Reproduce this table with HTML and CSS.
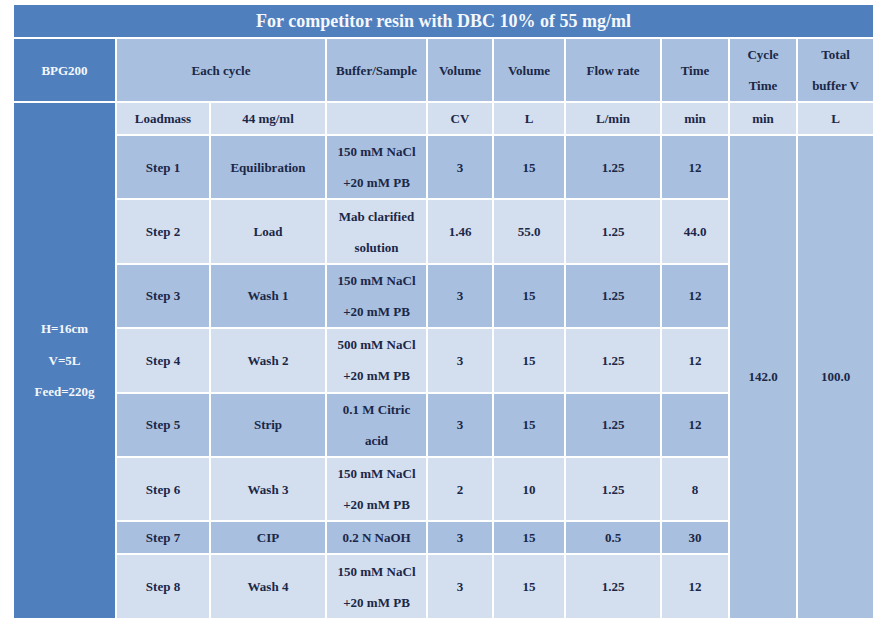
FILE: index.html
```html
<!DOCTYPE html>
<html>
<head>
<meta charset="utf-8">
<link rel="stylesheet" href="styles.css">
</head>
<body>
<table class="resin">
  <colgroup>
    <col class="c1"><col class="c2"><col class="c3"><col class="c4"><col class="c5">
    <col class="c6"><col class="c7"><col class="c8"><col class="c9"><col class="c10">
  </colgroup>
  <tr class="r-title"><td class="title" colspan="10">For competitor resin with DBC 10% of 55 mg/ml</td></tr>
  <tr class="r-head">
    <td class="dark">BPG200</td>
    <td class="mid" colspan="2">Each cycle</td>
    <td class="mid">Buffer/Sample</td>
    <td class="mid">Volume</td>
    <td class="mid">Volume</td>
    <td class="mid">Flow rate</td>
    <td class="mid">Time</td>
    <td class="mid">Cycle<br>Time</td>
    <td class="mid">Total<br>buffer V</td>
  </tr>
  <tr class="r-unit">
    <td class="dark info" rowspan="9">H=16cm<br>V=5L<br>Feed=220g</td>
    <td class="light">Loadmass</td>
    <td class="light">44 mg/ml</td>
    <td class="light"></td>
    <td class="light">CV</td>
    <td class="light">L</td>
    <td class="light">L/min</td>
    <td class="light">min</td>
    <td class="light">min</td>
    <td class="light">L</td>
  </tr>
  <tr class="r-step mid-row">
    <td>Step 1</td><td>Equilibration</td><td>150 mM NaCl<br>+20 mM PB</td>
    <td>3</td><td>15</td><td>1.25</td><td>12</td>
    <td class="mid total" rowspan="8">142.0</td>
    <td class="mid total" rowspan="8">100.0</td>
  </tr>
  <tr class="r-step light-row">
    <td>Step 2</td><td>Load</td><td>Mab clarified<br>solution</td>
    <td>1.46</td><td>55.0</td><td>1.25</td><td>44.0</td>
  </tr>
  <tr class="r-step mid-row">
    <td>Step 3</td><td>Wash 1</td><td>150 mM NaCl<br>+20 mM PB</td>
    <td>3</td><td>15</td><td>1.25</td><td>12</td>
  </tr>
  <tr class="r-step light-row">
    <td>Step 4</td><td>Wash 2</td><td>500 mM NaCl<br>+20 mM PB</td>
    <td>3</td><td>15</td><td>1.25</td><td>12</td>
  </tr>
  <tr class="r-step mid-row">
    <td>Step 5</td><td>Strip</td><td>0.1 M Citric<br>acid</td>
    <td>3</td><td>15</td><td>1.25</td><td>12</td>
  </tr>
  <tr class="r-step light-row">
    <td>Step 6</td><td>Wash 3</td><td>150 mM NaCl<br>+20 mM PB</td>
    <td>2</td><td>10</td><td>1.25</td><td>8</td>
  </tr>
  <tr class="r-short mid-row">
    <td>Step 7</td><td>CIP</td><td>0.2 N NaOH</td>
    <td>3</td><td>15</td><td>0.5</td><td>30</td>
  </tr>
  <tr class="r-step light-row">
    <td>Step 8</td><td>Wash 4</td><td>150 mM NaCl<br>+20 mM PB</td>
    <td>3</td><td>15</td><td>1.25</td><td>12</td>
  </tr>
</table>
</body>
</html>
```

FILE: styles.css
```css
html, body {
  margin: 0;
  padding: 0;
  background: #ffffff;
}

.resin {
  margin: 3px 0 0 12px;
  border-collapse: separate;
  border-spacing: 2px;
  table-layout: fixed;
  width: 863px;
  font-family: "Liberation Serif", "Times New Roman", serif;
  font-weight: bold;
  font-size: 13px;
  line-height: 31px;
  color: #1b2747;
}

.c1 { width: 101px; }
.c2 { width: 92px; }
.c3 { width: 114px; }
.c4 { width: 99px; }
.c5 { width: 64px; }
.c6 { width: 70px; }
.c7 { width: 94px; }
.c8 { width: 66px; }
.c9 { width: 66px; }
.c10 { width: 75px; }

.resin td {
  padding: 0;
  text-align: center;
  vertical-align: middle;
}

.r-title { height: 32px; }
.r-head { height: 62px; }
.r-unit { height: 31px; }
.r-step { height: 62.4px; }
.r-short { height: 31px; }

.resin td.title {
  background: #4f7fbd;
  color: #f4f7fc;
  font-size: 18px;
  line-height: 32px;
}

.resin td.dark {
  background: #4f80bd;
  color: #f4f7fc;
}

.resin td.info {
  line-height: 31.5px;
}

.resin td.mid,
.mid-row td {
  background: #a8bfdf;
}

.resin td.light,
.light-row td {
  background: #d3dfef;
}

.resin td.total {
  background: #a9c0df;
}
```
